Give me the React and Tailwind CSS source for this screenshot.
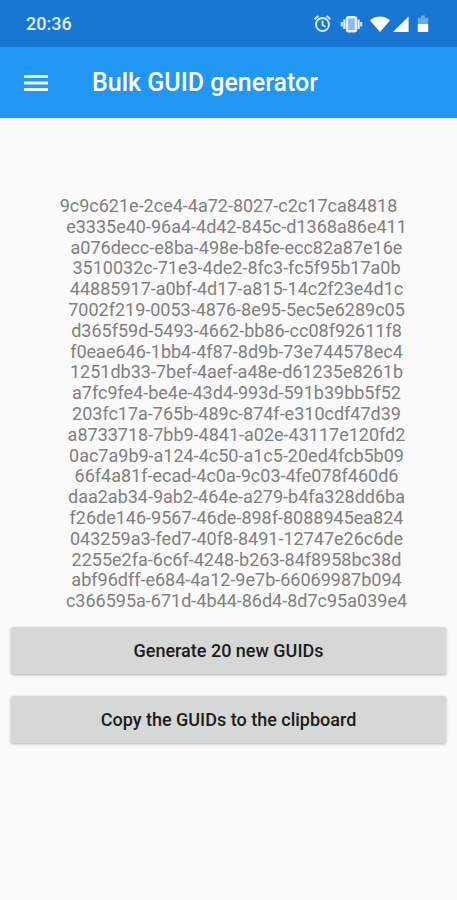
import { useState } from "react";

const initialGuids = [
  "9c9c621e-2ce4-4a72-8027-c2c17ca84818",
  "e3335e40-96a4-4d42-845c-d1368a86e411",
  "a076decc-e8ba-498e-b8fe-ecc82a87e16e",
  "3510032c-71e3-4de2-8fc3-fc5f95b17a0b",
  "44885917-a0bf-4d17-a815-14c2f23e4d1c",
  "7002f219-0053-4876-8e95-5ec5e6289c05",
  "d365f59d-5493-4662-bb86-cc08f92611f8",
  "f0eae646-1bb4-4f87-8d9b-73e744578ec4",
  "1251db33-7bef-4aef-a48e-d61235e8261b",
  "a7fc9fe4-be4e-43d4-993d-591b39bb5f52",
  "203fc17a-765b-489c-874f-e310cdf47d39",
  "a8733718-7bb9-4841-a02e-43117e120fd2",
  "0ac7a9b9-a124-4c50-a1c5-20ed4fcb5b09",
  "66f4a81f-ecad-4c0a-9c03-4fe078f460d6",
  "daa2ab34-9ab2-464e-a279-b4fa328dd6ba",
  "f26de146-9567-46de-898f-8088945ea824",
  "043259a3-fed7-40f8-8491-12747e26c6de",
  "2255e2fa-6c6f-4248-b263-84f8958bc38d",
  "abf96dff-e684-4a12-9e7b-66069987b094",
  "c366595a-671d-4b44-86d4-8d7c95a039e4",
];

const StatusIcons = () => (
  <svg width="118" height="20" viewBox="0 0 118 20" fill="none">
    {/* alarm */}
    <g stroke="#d9e8f8" strokeWidth="2">
      <circle cx="9.5" cy="10.5" r="6.5" />
      <path d="M9.5 6.5v4.4l3 1.8" strokeWidth="1.8" />
      <path d="M1.6 5.2l3.8-3.2M17.4 5.2l-3.800-3.2" />
    </g>
    {/* vibrate */}
    <rect x="34" y="3.2" width="9" height="14" rx="1.5" fill="#8dbbea" stroke="#e3effb" strokeWidth="2.4" />
    <path d="M31.4 5.6v9.4M45.6 5.6v9.4" stroke="#e3effb" strokeWidth="2.2" />
    <path d="M28.800 8v4.5M48.2 8v4.5" stroke="#c5dcf4" strokeWidth="2.2" />
    {/* wifi */}
    <path d="M57 6.4C62.4 1.2 71.6 1.2 77 6.4L67 18z" fill="#fff" />
    {/* signal */}
    <path d="M95.6 2.4V18H80z" fill="#fff" />
    {/* battery */}
    <path d="M108 1.6h4v2.2h3.2V10h-10.4V3.8h3.2z" fill="#6ba7e4" />
    <path d="M104.8 10h10.4v8h-10.4z" fill="#fff" />
  </svg>
);

const ActionButton = ({ children, onClick }) => (
  <button
    type="button"
    onClick={onClick}
    className="h-[47px] w-full rounded-[2px] bg-[#d6d7d7] text-lg font-medium text-[#1c1c1c] shadow-[0_1px_3px_rgba(0,0,0,0.3)] active:bg-[#c4c5c5]"
  >
    {children}
  </button>
);

export default function App() {
  const [guids, setGuids] = useState(initialGuids);

  const generate = () => setGuids(guids.map(() => crypto.randomUUID()));
  const copy = () => navigator.clipboard?.writeText(guids.join("\n"));

  return (
    <div className="min-h-screen bg-[#fafafa] font-[Roboto,sans-serif]">
      <div className="flex h-[47px] items-center justify-between bg-[#1976d2] px-[26px]">
        <span className="text-lg font-medium text-[#e3effb]">20:36</span>
        <StatusIcons />
      </div>

      <header className="flex h-[71px] items-center gap-11 bg-[#2196f3] px-6 text-white">
        <button type="button" aria-label="Open menu">
          <svg width="24" height="18" viewBox="0 0 24 18" fill="#e9f4fe">
            <path d="M0 1h24v3H0zM0 7.5h24v3H0zM0 14h24v3H0z" />
          </svg>
        </button>
        <h1 className="text-[25px] font-medium">Bulk GUID generator</h1>
      </header>

      <main className="px-[11px] pt-[78px]">
        <ul className="grid auto-rows-fr text-center text-lg/5 text-[#808080] h-[416px]">
          {guids.map((guid, i) => (
            <li key={guid} className={i === 0 ? "" : "pl-4"}>
              {guid}
            </li>
          ))}
        </ul>

        <div className="mt-[15px] flex flex-col gap-[22px]">
          <ActionButton onClick={generate}>Generate 20 new GUIDs</ActionButton>
          <ActionButton onClick={copy}>Copy the GUIDs to the clipboard</ActionButton>
        </div>
      </main>
    </div>
  );
}
